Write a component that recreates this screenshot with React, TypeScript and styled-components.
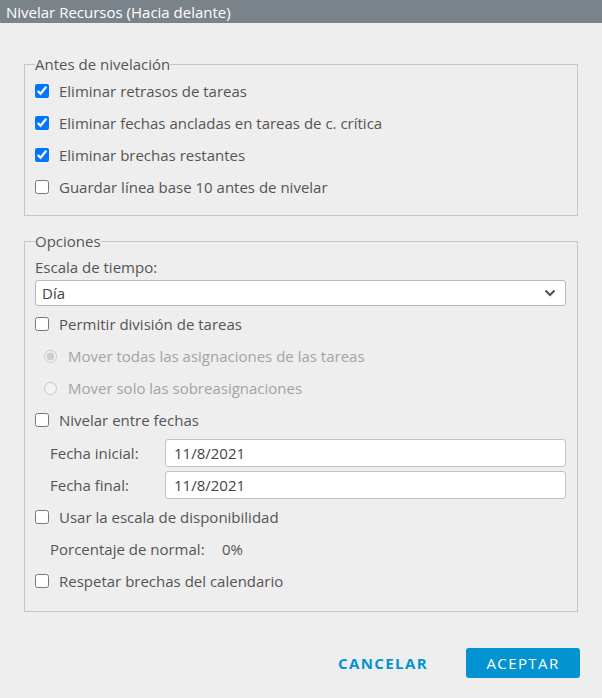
import React, { useState } from 'react';
import styled, { createGlobalStyle } from 'styled-components';

const GlobalStyle = createGlobalStyle`
    html, body {
        margin: 0;
        padding: 0;
        background: #eeeeee;
    }
    body {
        font-family: "Open Sans", "Liberation Sans", sans-serif;
    }
`;

const Dialog = styled.div`
    width: 602px;
    height: 698px;
    background: #eeeeee;
    display: flex;
    flex-direction: column;
    color: #555;
    font-size: 15px;
`;

const TitleBar = styled.div`
    height: 28px;
    background: #7b838a;
    color: #fff;
    font-size: 15px;
    display: flex;
    align-items: center;
    padding-left: 6px;
`;

const Body = styled.div`
    flex: 1;
    display: flex;
    flex-direction: column;
    gap: 16px;
    padding: 32px 24px 0 24px;
`;

const Group = styled.fieldset<{ bottomGap: number }>`
    margin: 0;
    border: 1px solid #c6c6c6;
    padding: 2px 0 ${({ bottomGap }) => bottomGap}px 10px;
    display: flex;
    flex-direction: column;

    legend {
        padding: 0;
        margin-left: 0;
        line-height: 18px;
        color: #555;
    }
`;

const CheckRow = styled.label<{ indent?: number; disabled?: boolean; topGap?: number }>`
    height: 32px;
    display: flex;
    align-items: center;
    gap: 10px;
    margin-top: ${({ topGap }) => topGap || 0}px;
    padding-left: ${({ indent }) => indent || 0}px;
    color: ${({ disabled }) => (disabled ? '#a3a3a3' : '#555')};

    input[type='checkbox'] {
        width: 14px;
        height: 14px;
        margin: 0;
    }

    input[type='radio'] {
        width: 13px;
        height: 13px;
        margin: 0 1px 0 0;
    }
`;

const FieldLabel = styled.div`
    height: 26px;
    display: flex;
    align-items: center;
    padding-top: 2px;
`;

const Select = styled.div`
    height: 26px;
    margin-right: 11px;
    box-sizing: border-box;
    background: #fff;
    border: 1px solid #b9b9b9;
    border-radius: 3px;
    display: flex;
    align-items: center;
    justify-content: space-between;
    padding: 0 9px 0 6px;
    color: #444;
`;

const DateRow = styled.div<{ topGap?: number }>`
    height: 32px;
    display: flex;
    align-items: center;
    margin-top: ${({ topGap }) => topGap || 0}px;
    padding-left: 15px;
    margin-right: 11px;
`;

const DateLabel = styled.span`
    width: 115px;
`;

const DateInput = styled.input`
    flex: 1;
    height: 28px;
    box-sizing: border-box;
    border: 1px solid #c2c2c2;
    border-radius: 3px;
    background: #fff;
    font: inherit;
    color: #444;
    padding: 0 8px;
    outline: none;
`;

const InfoRow = styled.div`
    height: 32px;
    display: flex;
    align-items: center;
    padding-left: 15px;

    span:first-child {
        width: 172px;
    }
`;

const Footer = styled.div`
    height: 80px;
    display: flex;
    align-items: flex-end;
    justify-content: flex-end;
    gap: 38px;
    padding: 0 22px 20px 0;
`;

const Button = styled.button<{ primary?: boolean }>`
    height: 30px;
    width: ${({ primary }) => (primary ? '114px' : 'auto')};
    padding: 0;
    border: none;
    border-radius: 3px;
    font-family: "Open Sans", "Liberation Sans", sans-serif;
    font-size: 15px;
    font-weight: ${({ primary }) => (primary ? 500 : 700)};
    letter-spacing: 1.4px;
    background: ${({ primary }) => (primary ? '#0393d0' : 'transparent')};
    color: ${({ primary }) => (primary ? '#fff' : '#0393d0')};
    cursor: pointer;
`;

const Chevron = () => (
    <svg width="12" height="8" viewBox="0 0 12 8">
        <path d="M1.5 1.5 L6 6 L10.5 1.5" fill="none" stroke="#555" strokeWidth="2.2" />
    </svg>
);

const App = () => {
    const [before, setBefore] = useState([true, true, true, false]);

    const toggle = (i: number) => setBefore(before.map((v, j) => (j === i ? !v : v)));

    const beforeLabels = [
        'Eliminar retrasos de tareas',
        'Eliminar fechas ancladas en tareas de c. crítica',
        'Eliminar brechas restantes',
        'Guardar línea base 10 antes de nivelar',
    ];

    return (
        <Dialog>
            <GlobalStyle />
            <TitleBar>Nivelar Recursos (Hacia delante)</TitleBar>
            <Body>
                <Group bottomGap={12}>
                    <legend>Antes de nivelación</legend>
                    {beforeLabels.map((label, i) => (
                        <CheckRow key={label}>
                            <input type="checkbox" checked={before[i]} onChange={() => toggle(i)} />
                            {label}
                        </CheckRow>
                    ))}
                </Group>

                <Group bottomGap={14}>
                    <legend>Opciones</legend>
                    <FieldLabel>Escala de tiempo:</FieldLabel>
                    <Select>
                        <span>Día</span>
                        <Chevron />
                    </Select>
                    <CheckRow topGap={2}>
                        <input type="checkbox" />
                        Permitir división de tareas
                    </CheckRow>
                    <CheckRow indent={9} disabled>
                        <input type="radio" name="split" defaultChecked disabled />
                        Mover todas las asignaciones de las tareas
                    </CheckRow>
                    <CheckRow indent={9} disabled>
                        <input type="radio" name="split" disabled />
                        Mover solo las sobreasignaciones
                    </CheckRow>
                    <CheckRow>
                        <input type="checkbox" />
                        Nivelar entre fechas
                    </CheckRow>
                    <DateRow topGap={1}>
                        <DateLabel>Fecha inicial:</DateLabel>
                        <DateInput defaultValue="11/8/2021" />
                    </DateRow>
                    <DateRow>
                        <DateLabel>Fecha final:</DateLabel>
                        <DateInput defaultValue="11/8/2021" />
                    </DateRow>
                    <CheckRow>
                        <input type="checkbox" />
                        Usar la escala de disponibilidad
                    </CheckRow>
                    <InfoRow>
                        <span>Porcentaje de normal:</span>
                        <span>0%</span>
                    </InfoRow>
                    <CheckRow>
                        <input type="checkbox" />
                        Respetar brechas del calendario
                    </CheckRow>
                </Group>
            </Body>
            <Footer>
                <Button>CANCELAR</Button>
                <Button primary>ACEPTAR</Button>
            </Footer>
        </Dialog>
    );
};

export default App;
